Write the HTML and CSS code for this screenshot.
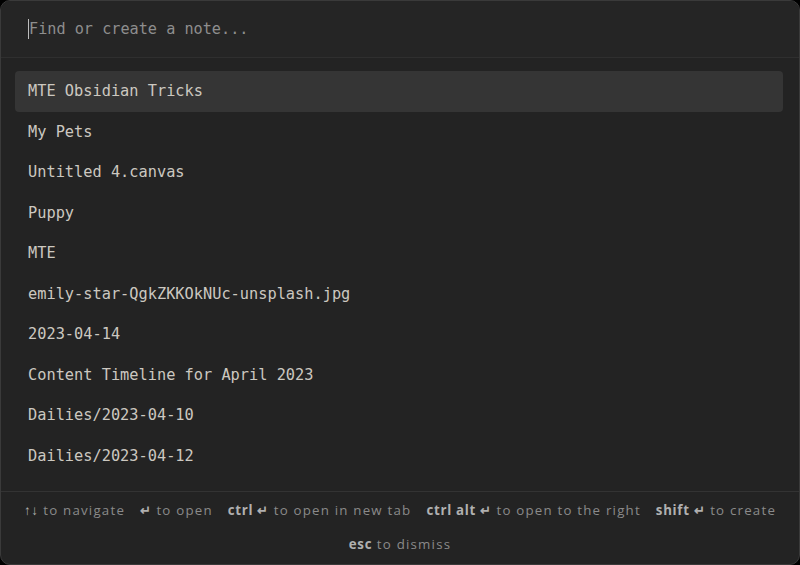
FILE: index.html
```html
<!DOCTYPE html>
<html>
<head>
<meta charset="utf-8">
<link rel="stylesheet" href="styles.css">
</head>
<body>
<div class="modal">
  <div class="prompt">
    <span class="caret"></span><span class="placeholder">Find or create a note...</span>
  </div>
  <ul class="results">
    <li class="item selected">MTE Obsidian Tricks</li>
    <li class="item">My Pets</li>
    <li class="item">Untitled 4.canvas</li>
    <li class="item">Puppy</li>
    <li class="item">MTE</li>
    <li class="item">emily-star-QgkZKKOkNUc-unsplash.jpg</li>
    <li class="item">2023-04-14</li>
    <li class="item">Content Timeline for April 2023</li>
    <li class="item">Dailies/2023-04-10</li>
    <li class="item">Dailies/2023-04-12</li>
  </ul>
  <div class="instructions">
    <span class="ins"><b>↑↓</b> to navigate</span>
    <span class="ins"><b>↵</b> to open</span>
    <span class="ins"><b>ctrl ↵</b> to open in new tab</span>
    <span class="ins"><b>ctrl alt ↵</b> to open to the right</span>
    <span class="ins"><b>shift ↵</b> to create</span>
    <span class="ins"><b>esc</b> to dismiss</span>
  </div>
</div>
</body>
</html>
```
FILE: styles.css
```css
html, body {
  margin: 0;
  padding: 0;
  background: #000;
  height: 100%;
}
.modal {
  box-sizing: border-box;
  width: 800px;
  height: 565px;
  background: #232323;
  border: 1px solid #3a3a3a;
  border-radius: 10px;
  display: flex;
  flex-direction: column;
  overflow: hidden;
}
.prompt {
  height: 56px;
  flex: none;
  display: flex;
  align-items: center;
  padding-left: 27px;
  background: #252525;
  border-bottom: 1px solid #2f2f2f;
  font-family: "DejaVu Sans Mono", monospace;
  font-size: 15.2px;
}
.caret {
  width: 1px;
  height: 20px;
  background: #bdbdbd;
}
.placeholder {
  color: #8e8e8e;
}
.results {
  list-style: none;
  margin: 0;
  padding: 13px 16px 0 14px;
  flex: 1;
  font-family: "DejaVu Sans Mono", monospace;
  font-size: 15.3px;
  color: #ccc8c0;
}
.item {
  height: 40.5px;
  line-height: 40px;
  padding-left: 13px;
  border-radius: 4px;
}
.item.selected {
  background: #353535;
}
.instructions {
  flex: none;
  border-top: 1px solid #333;
  display: flex;
  flex-wrap: wrap;
  justify-content: center;
  column-gap: 15px;
  padding: 1px 12px 3px;
  font-family: "Open Sans", sans-serif;
  font-size: 13.3px;
  letter-spacing: 1.2px;
  color: #8a8a8a;
}
.ins {
  line-height: 34px;
}
.ins b {
  color: #b0b0b0;
  font-weight: 700;
  letter-spacing: 0.7px;
}
```
